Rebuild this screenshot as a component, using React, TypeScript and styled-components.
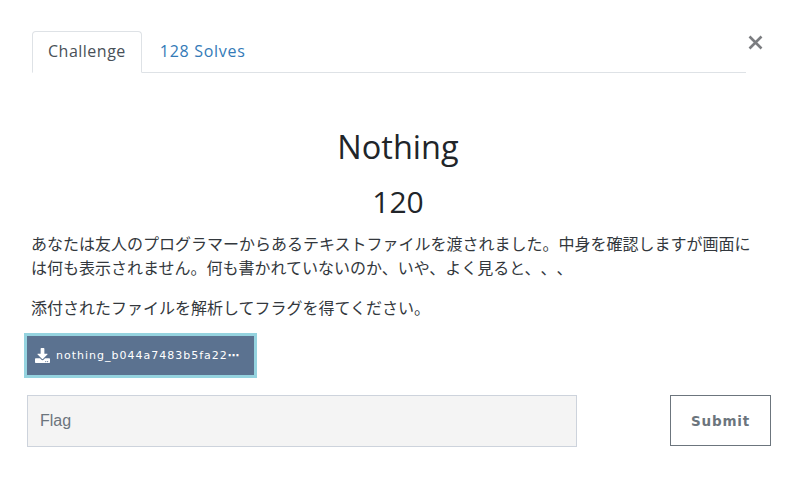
import { FC } from 'react'
import styled, { createGlobalStyle } from 'styled-components'
import { FaDownload } from 'react-icons/fa'

const GlobalStyle = createGlobalStyle`
    html, body {
        margin: 0;
        padding: 0;
        background: #fff;
    }
    body {
        font-family: "Open Sans", "Noto Sans CJK JP", sans-serif;
        color: #212529;
    }
`

const Modal = styled.div`
    position: relative;
    width: 796px;
    height: 494px;
    padding: 31px 25px 0 27px;
    box-sizing: border-box;
    overflow: hidden;
`

const CloseButton = styled.button`
    position: absolute;
    top: 34px;
    right: 32px;
    width: 17px;
    height: 17px;
    padding: 0;
    border: 0;
    background: none;
    color: #7b7d80;

    svg {
        display: block;
    }
`

const TabBar = styled.div`
    display: flex;
    height: 41px;
    margin: 0 25px 0 5px;
    border-bottom: 1px solid #dee2e6;
`

const Tab = styled.a<{ $active?: boolean }>`
    box-sizing: border-box;
    height: 42px;
    padding: 7px 15px 0;
    margin-right: ${p => (p.$active ? '2px' : '0')};
    font-size: 16px;
    line-height: 24px;
    letter-spacing: ${p => (p.$active ? '0.5px' : '0.7px')};
    border: 1px solid ${p => (p.$active ? '#dee2e6' : 'transparent')};
    border-bottom: ${p => (p.$active ? '1px solid #fff' : '0')};
    border-radius: 4px 4px 0 0;
    background: ${p => (p.$active ? '#fff' : 'transparent')};
    color: ${p => (p.$active ? '#495057' : '#337ab7')};
`

const Title = styled.h3`
    margin: 50px 2px 0 0;
    font-size: 32.5px;
    line-height: 48px;
    font-weight: 400;
    text-align: center;
`

const Value = styled.h4`
    margin: 11px 2px 0 0;
    font-size: 30px;
    line-height: 40px;
    font-weight: 400;
    text-align: center;
`

const Description = styled.div`
    margin: 10px 5px 0 4px;
    color: #33383d;
    font-size: 16px;
    line-height: 24px;
    text-spacing-trim: space-all;

    p {
        margin: 0 0 16px;
    }
`

const DownloadButton = styled.a`
    display: flex;
    align-items: center;
    gap: 6px;
    box-sizing: border-box;
    width: 227px;
    height: 39px;
    margin: 16px 0 0;
    padding: 0 8px;
    background: #5b7290;
    outline: 3px solid #95d3df;
    color: #fff;
    font-family: "DejaVu Sans", sans-serif;
    font-size: 11px;
    font-weight: 400;
    letter-spacing: 1px;
    white-space: nowrap;

    svg {
        flex: none;
        width: 15px;
        height: 15px;
    }
`

const Ellipsis = styled.b`
    font-weight: 700;
`

const SubmitRow = styled.form`
    display: flex;
    justify-content: space-between;
    align-items: flex-start;
    margin: 20px 0 0;
`

const FlagInput = styled.input`
    box-sizing: border-box;
    width: 550px;
    height: 52px;
    padding: 0 12px;
    border: 1px solid #cdd3dc;
    background: #f4f4f4;
    font-family: "Liberation Sans", sans-serif;
    font-size: 16px;

    &::placeholder {
        color: #6c757d;
        opacity: 1;
    }
`

const SubmitButton = styled.button`
    box-sizing: border-box;
    width: 101px;
    height: 51px;
    padding: 0;
    border: 1px solid #6c757d;
    background: #fff;
    color: #6c757d;
    font-family: "DejaVu Sans", sans-serif;
    font-size: 13.5px;
    font-weight: 700;
    letter-spacing: 0.8px;
`

const App: FC = () => {
    return (
        <Modal>
            <GlobalStyle />
            <CloseButton aria-label="Close">
                <svg width="17" height="17" viewBox="0 0 17 17">
                    <path d="M2.5 2.5L14.5 14.5M14.5 2.5L2.5 14.5" stroke="currentColor" strokeWidth="2.6" />
                </svg>
            </CloseButton>
            <TabBar>
                <Tab $active>Challenge</Tab>
                <Tab>128 Solves</Tab>
            </TabBar>
            <Title>Nothing</Title>
            <Value>120</Value>
            <Description>
                <p>あなたは友人のプログラマーからあるテキストファイルを渡されました。中身を確認しますが画面には何も表示されません。何も書かれていないのか、いや、よく見ると、、、</p>
                <p>添付されたファイルを解析してフラグを得てください。</p>
            </Description>
            <DownloadButton>
                <FaDownload />
                <span>nothing_b044a7483b5fa22<Ellipsis>⋯</Ellipsis></span>
            </DownloadButton>
            <SubmitRow>
                <FlagInput placeholder="Flag" />
                <SubmitButton type="button">Submit</SubmitButton>
            </SubmitRow>
        </Modal>
    )
}

export default App
